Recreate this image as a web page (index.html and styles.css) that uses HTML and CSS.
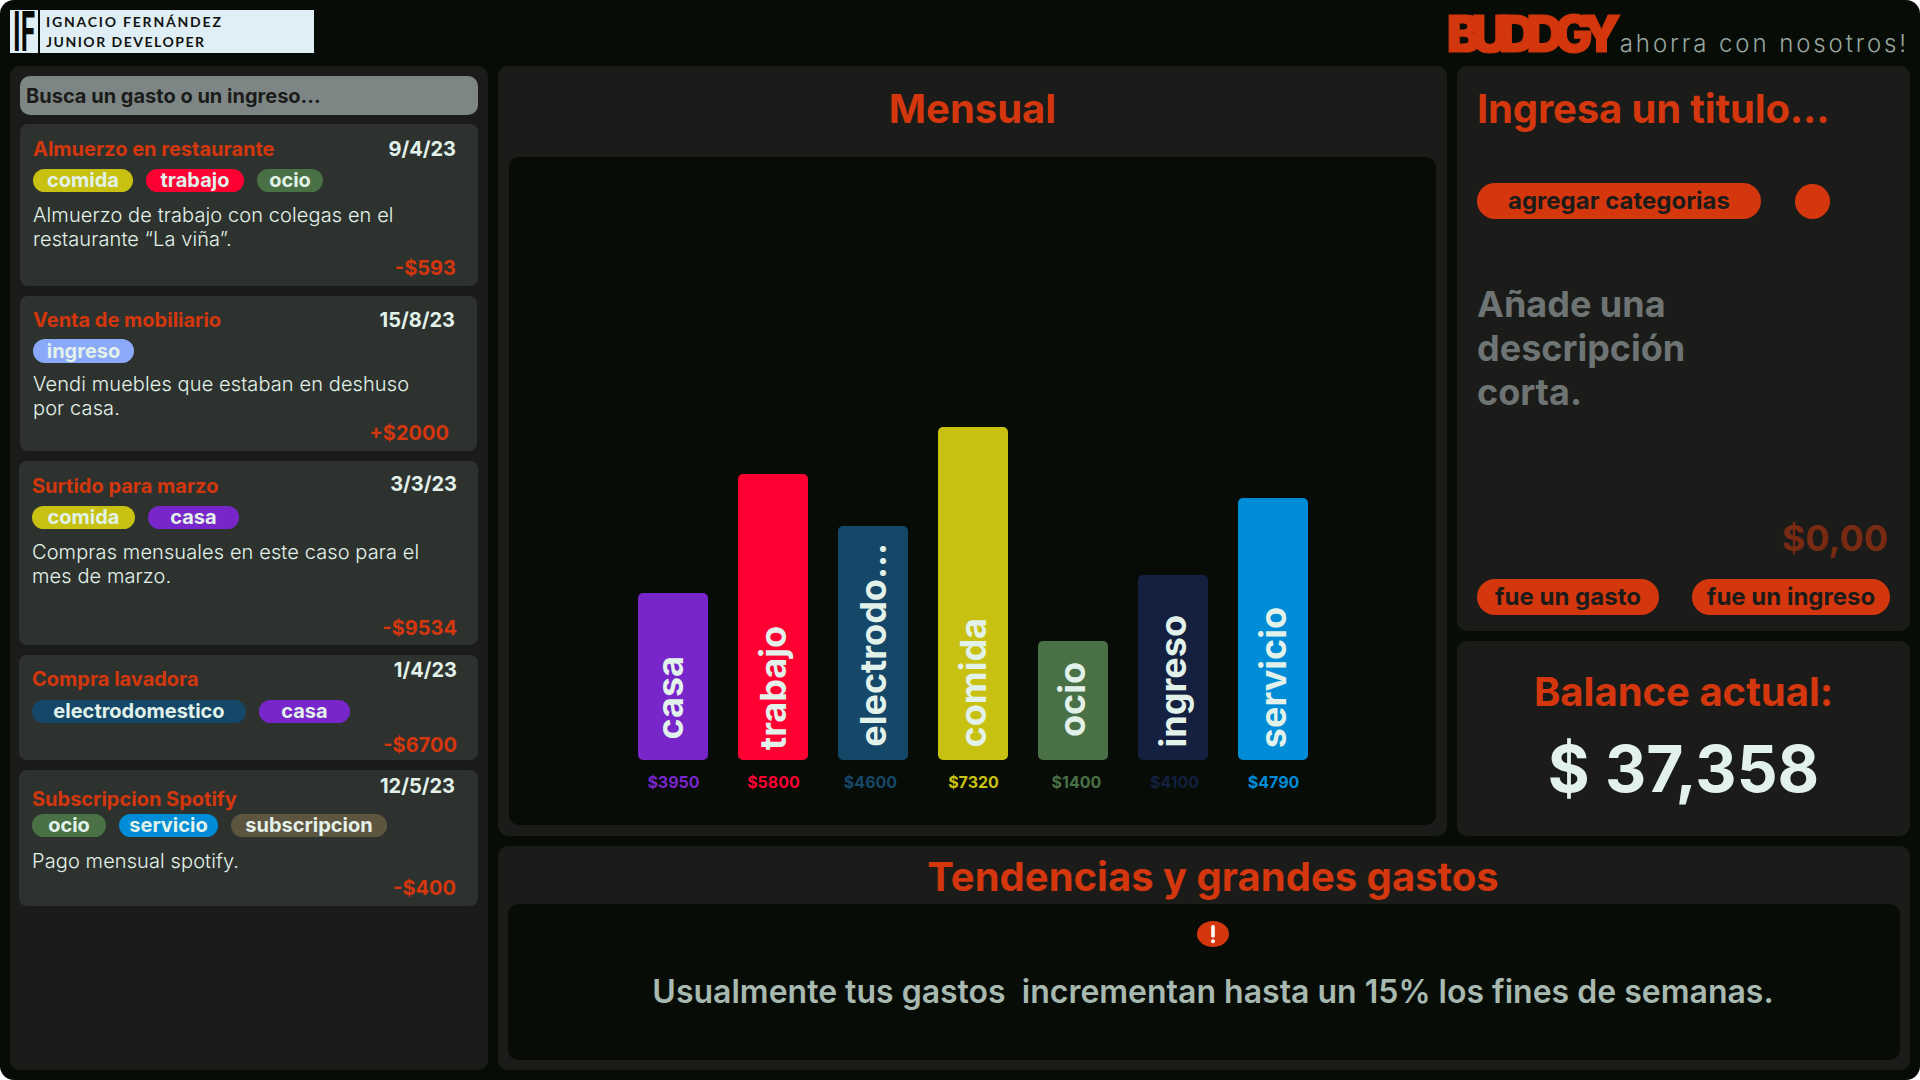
FILE: index.html
```html
<!DOCTYPE html>
<html lang="es">
<head>
<meta charset="utf-8">
<title>Buddgy</title>
<link rel="stylesheet" href="styles.css">
</head>
<body>
<div class="app">
  <header class="topbar">
    <div class="brand-left">
      <div class="if-logo"><span class="if-text">IF</span></div>
      <div class="namecard">
        <span class="name-line">IGNACIO FERNÁNDEZ</span>
        <span class="name-line name-role">JUNIOR DEVELOPER</span>
      </div>
    </div>
    <div class="brand-right">
      <span class="buddgy">BUDDGY</span>
      <span class="slogan">ahorra con nosotros!</span>
    </div>
  </header>
  <main class="board">
    <aside class="panel list-panel">
      <div class="search">Busca un gasto o un ingreso...</div>
      <article class="card card-1">
        <div class="card-head"><span class="card-title">Almuerzo en restaurante</span><span class="card-date">9/4/23</span></div>
        <div class="tags"><span class="tag t-comida">comida</span><span class="tag t-trabajo">trabajo</span><span class="tag t-ocio">ocio</span></div>
        <p class="card-desc">Almuerzo de trabajo con colegas en el restaurante “La viña”.</p>
        <div class="card-amount">-$593</div>
      </article>
      <article class="card card-2">
        <div class="card-head"><span class="card-title">Venta de mobiliario</span><span class="card-date">15/8/23</span></div>
        <div class="tags"><span class="tag t-ingreso">ingreso</span></div>
        <p class="card-desc">Vendi muebles que estaban en deshuso por casa.</p>
        <div class="card-amount">+$2000</div>
      </article>
      <article class="card card-3">
        <div class="card-head"><span class="card-title">Surtido para marzo</span><span class="card-date">3/3/23</span></div>
        <div class="tags"><span class="tag t-comida">comida</span><span class="tag t-casa">casa</span></div>
        <p class="card-desc">Compras mensuales en este caso para el mes de marzo.</p>
        <div class="card-amount">-$9534</div>
      </article>
      <article class="card card-4">
        <div class="card-head"><span class="card-title">Compra lavadora</span><span class="card-date">1/4/23</span></div>
        <div class="tags"><span class="tag t-electro">electrodomestico</span><span class="tag t-casa">casa</span></div>
        <div class="card-amount">-$6700</div>
      </article>
      <article class="card card-5">
        <div class="card-head"><span class="card-title">Subscripcion Spotify</span><span class="card-date">12/5/23</span></div>
        <div class="tags"><span class="tag t-ocio">ocio</span><span class="tag t-servicio">servicio</span><span class="tag t-subs">subscripcion</span></div>
        <p class="card-desc">Pago mensual spotify.</p>
        <div class="card-amount">-$400</div>
      </article>
    </aside>
    <div class="content">
      <div class="upper">
        <section class="panel chart-panel">
          <h2 class="heading chart-heading">Mensual</h2>
          <div class="chart">
            <div class="col"><div class="bar c-casa" style="height:167px"><span class="bar-text">casa</span></div><span class="val v-casa">$3950</span></div>
            <div class="col"><div class="bar c-trabajo" style="height:286px"><span class="bar-text">trabajo</span></div><span class="val v-trabajo">$5800</span></div>
            <div class="col"><div class="bar c-electro" style="height:234px"><span class="bar-text">electrodo...</span></div><span class="val v-electro">$4600</span></div>
            <div class="col"><div class="bar c-comida" style="height:333px"><span class="bar-text">comida</span></div><span class="val v-comida">$7320</span></div>
            <div class="col"><div class="bar c-ocio" style="height:119px"><span class="bar-text">ocio</span></div><span class="val v-ocio">$1400</span></div>
            <div class="col"><div class="bar c-ingreso" style="height:185px"><span class="bar-text">ingreso</span></div><span class="val v-ingreso">$4100</span></div>
            <div class="col"><div class="bar c-servicio" style="height:262px"><span class="bar-text">servicio</span></div><span class="val v-servicio">$4790</span></div>
          </div>
        </section>
        <div class="side">
          <section class="panel form-panel">
            <h2 class="heading form-title">Ingresa un titulo...</h2>
            <div class="cat-row"><span class="pill pill-cat">agregar categorias</span><span class="dot"></span></div>
            <p class="form-desc">Añade una descripción corta.</p>
            <div class="form-amount">$0,00</div>
            <div class="btn-row"><span class="pill pill-gasto">fue un gasto</span><span class="pill pill-ingreso">fue un ingreso</span></div>
          </section>
          <section class="panel balance-panel">
            <h2 class="heading balance-title">Balance actual:</h2>
            <div class="balance-value">$ 37,358</div>
          </section>
        </div>
      </div>
      <section class="panel trends-panel">
        <h2 class="heading trends-heading">Tendencias y grandes gastos</h2>
        <div class="trends-box">
          <svg class="alert" width="32" height="26" viewBox="0 0 32 26"><ellipse cx="16" cy="13" rx="16" ry="13" fill="#d4370d"/><rect x="14.2" y="4" width="3.6" height="12.5" rx="1.6" fill="#fff"/><circle cx="16" cy="20.2" r="2" fill="#fff"/></svg>
          <p class="trends-text">Usualmente tus gastos&nbsp; incrementan hasta un 15% los fines de semanas.</p>
        </div>
      </section>
    </div>
  </main>
</div>
</body>
</html>
```
FILE: styles.css
```css
* { box-sizing: border-box; }
html, body { margin: 0; padding: 0; background: #fff; }
body { font-family: Inter, "Liberation Sans", sans-serif; overflow: hidden; }
h2, p { margin: 0; }

.app {
  width: 1920px; height: 1080px;
  background: #080c07;
  border-radius: 14px;
  padding: 10px;
  display: flex; flex-direction: column;
  overflow: hidden;
}

/* top bar */
.topbar { height: 56px; display: flex; justify-content: space-between; align-items: flex-start; flex: none; }
.brand-left { display: flex; gap: 2px; }
.if-logo { width: 28px; height: 43px; background: #e0eff5; display: flex; align-items: center; justify-content: center; }
.if-text { font-family: Roboto, sans-serif; font-size: 26px; line-height: 1; font-weight: 700; color: #080c07; display: block; transform: scale(1, 2.15); }
.namecard {
  width: 274px; height: 43px; background: #e0eff5;
  display: flex; flex-direction: column; padding: 2px 0 0 6px;
}
.name-line { font-family: Lato, sans-serif; font-weight: 700; font-size: 14px; line-height: 20px; letter-spacing: 1.8px; color: #121412; }
.name-role { letter-spacing: 1.5px; }
.brand-right { display: flex; align-items: flex-end; height: 43px; padding-right: 1px; }
.buddgy {
  font-weight: 900; font-size: 51px; line-height: 44px; letter-spacing: -9.3px;
  color: #d4370d; -webkit-text-stroke: 1px #d4370d; width: 173px; height: 44px; display: block;
  margin-bottom: -3px;
}
.slogan { font-weight: 300; font-size: 24px; line-height: 28px; letter-spacing: 2.9px; color: #96a69f; margin-bottom: -5px; }

/* board */
.board { flex: 1; display: flex; gap: 10px; min-height: 0; }
.panel { background: #1b1c1a; border-radius: 10px; }
.list-panel { width: 478px; flex: none; padding: 10px; display: flex; flex-direction: column; gap: 10px; }
.content { flex: 1; display: flex; flex-direction: column; gap: 10px; min-width: 0; }
.upper { display: flex; gap: 10px; height: 770px; flex: none; }
.side { width: 453px; flex: none; display: flex; flex-direction: column; gap: 10px; }

/* search */
.search {
  height: 39px; background: #7e8685; border-radius: 10px; margin-bottom: -1px;
  padding-left: 6px; display: flex; align-items: center;
  font-weight: 700; font-size: 20px; color: #1b1c1a;
}

/* cards */
.card { background: #2e322f; border-radius: 8px; display: flex; flex-direction: column; padding-left: 13px; padding-right: 22px; flex: none; }
.card-head { display: flex; justify-content: space-between; }
.card-title { font-weight: 700; font-size: 20px; line-height: 24px; color: #d4370d; }
.card-date { font-weight: 700; font-size: 20px; line-height: 24px; color: #e2f2ea; }
.tags { display: flex; gap: 13px; }
.tag {
  height: 23px; border-radius: 12px; display: flex; align-items: center; justify-content: center;
  font-weight: 700; font-size: 20px; line-height: 23px; color: #e2f2ea; flex: none;
}
.t-comida { width: 100px; background: #c8c111; }
.t-trabajo { width: 98px; background: #ff0033; }
.t-ocio { width: 66px; background: #4a7045; }
.t-ingreso { width: 101px; height: 24px; background: #8ba9f9; }
.t-casa { width: 91px; background: #7826c9; }
.t-electro { width: 214px; background: #154868; }
.t-servicio { width: 99px; background: #008cd6; }
.t-subs { width: 156px; background: #5e5540; }
.card-desc { font-weight: 300; font-size: 20px; line-height: 24px; letter-spacing: 0.1px; color: #e2f2ea; }
.card-amount { margin-top: auto; text-align: right; font-weight: 700; font-size: 20px; line-height: 24px; color: #d4370d; }

.card-1 { height: 162px; padding-top: 13px; padding-bottom: 6px; }
.card-1 .tags { margin-top: 8px; }
.card-1 .card-desc { margin-top: 11px; }
.card-2 { height: 155px; padding-top: 12px; padding-bottom: 6px; width: 457px; padding-right: 22px; }
.card-2 .tags { margin-top: 7px; }
.card-2 .card-desc { margin-top: 9px; width: 400px; }
.card-2 .card-amount { margin-right: 6px; }
.card-3 { height: 184px; padding-top: 13px; padding-bottom: 5px; margin-left: -1px; padding-right: 21px; }
.card-3 .card-date { margin-top: -2px; }
.card-3 .tags { margin-top: 8px; }
.card-3 .t-comida { width: 103px; }
.card-3 .card-desc { margin-top: 11px; }
.card-4 { height: 105px; padding-top: 3px; padding-bottom: 3px; margin-left: -1px; padding-right: 21px; }
.card-4 .card-title { margin-top: 9px; }
.card-4 .tags { margin-top: 9px; }
.card-5 { height: 136px; padding-top: 4px; padding-bottom: 6px; margin-left: -1px; padding-right: 23px; }
.card-5 .card-title { margin-top: 13px; }
.card-5 .tags { margin-top: 3px; }
.card-5 .t-ocio { width: 74px; }
.card-5 .card-desc { margin-top: 12px; }
.card-5 .card-amount { margin-right: -1px; }

/* headings */
.heading { font-weight: 700; font-size: 40px; line-height: 48px; color: #d4370d; }

/* chart */
.chart-panel { flex: 1; min-width: 0; padding: 0 11px 11px; display: flex; flex-direction: column; }
.chart-heading { text-align: center; padding-top: 19px; height: 91px; flex: none; }
.chart { flex: 1; background: #080c07; border-radius: 10px; display: flex; justify-content: center; gap: 30px; align-items: flex-end; padding-bottom: 33px; }
.col { width: 70px; display: flex; flex-direction: column; align-items: center; }
.bar { width: 70px; border-radius: 5px; display: flex; justify-content: center; align-items: flex-end; }
.bar-text { writing-mode: vertical-rl; transform: rotate(180deg); font-weight: 700; font-size: 36px; line-height: 1; color: #e2f2ea; white-space: nowrap; }
.val { margin-top: 12px; padding-left: 2px; font-weight: 700; font-size: 16px; line-height: 20px; white-space: nowrap; }
.c-casa { background: #7826c9; padding: 0 6px 21px 0; } .v-casa { color: #7826c9; }
.c-trabajo { background: #ff0033; padding-bottom: 10px; } .v-trabajo { color: #ff0033; }
.c-electro { background: #154868; padding-bottom: 13px; } .v-electro { color: #154868; margin-left: -6px; }
.c-comida { background: #c8c111; padding-bottom: 13px; } .v-comida { color: #c8c111; }
.c-ocio { background: #4a7045; padding: 0 2px 23px 0; } .v-ocio { color: #4a7045; margin-left: 6px; }
.c-ingreso { background: #13203f; padding-bottom: 13px; } .v-ingreso { color: #13203f; margin-left: 2px; }
.c-servicio { background: #008cd6; padding-bottom: 12px; } .v-servicio { color: #008cd6; }

/* form */
.form-panel { height: 565px; padding: 19px 20px 0 20px; display: flex; flex-direction: column; }
.form-title { letter-spacing: -0.15px; }
.cat-row { display: flex; align-items: center; margin-top: 50px; gap: 34px; }
.pill {
  background: #d4370d; border-radius: 18px; height: 36px; display: flex; align-items: center; justify-content: center;
  padding-bottom: 2px;
  font-weight: 700; font-size: 24px; color: #1b1c1a; flex: none;
}
.pill-cat { width: 284px; }
.dot { width: 35px; height: 35px; border-radius: 50%; background: #d4370d; flex: none; }
.form-desc { margin-top: 63px; width: 240px; font-weight: 700; font-size: 36px; line-height: 44px; color: #6e7473; }
.form-amount { margin-top: 100px; text-align: right; padding-right: 2px; font-weight: 700; font-size: 36px; line-height: 48px; color: #792a13; }
.btn-row { display: flex; gap: 33px; margin-top: 17px; }
.pill-gasto { width: 182px; }
.pill-ingreso { width: 198px; }

/* balance */
.balance-panel { flex: 1; display: flex; flex-direction: column; align-items: center; padding-top: 27px; }
.balance-value { margin-top: 14px; font-weight: 700; font-size: 64px; line-height: 77px; color: #e2f2ea; }

/* trends */
.trends-panel { flex: 1; padding: 7px 10px 10px; display: flex; flex-direction: column; }
.trends-heading { text-align: center; height: 51px; flex: none; padding-left: 18px; }
.trends-box { flex: 1; background: #080c07; border-radius: 10px; display: flex; flex-direction: column; align-items: center; padding: 17px 0 0 18px; }
.alert { display: block; flex: none; }
.trends-text { margin-top: 26px; font-weight: 600; font-size: 32px; line-height: 38px; color: #a7b9b0; white-space: nowrap; }
```
